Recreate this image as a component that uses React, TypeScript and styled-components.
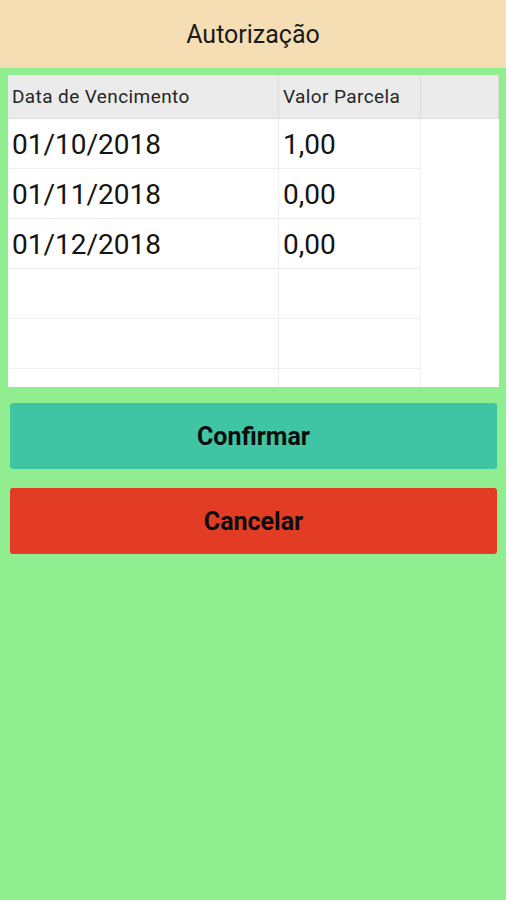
import { Fragment } from "react";
import styled, { createGlobalStyle } from "styled-components";

const GlobalStyle = createGlobalStyle`
  html, body {
    margin: 0;
    padding: 0;
    background: #90ee90;
    font-family: Roboto, "Noto Sans", Arial, sans-serif;
  }
`;

const Page = styled.div`
  width: 506px;
  min-height: 900px;
  background: #90ee90;
`;

const TopBar = styled.div`
  height: 68px;
  background: #f5deb3;
  display: flex;
  align-items: center;
  justify-content: center;
  font-size: 25px;
  color: #1a1a1a;
`;

const Content = styled.div`
  padding: 7px 7px 0 8px;
  display: flex;
  flex-direction: column;
`;

const TablePanel = styled.div`
  height: 312px;
  background: #ffffff;
  overflow: hidden;
`;

const Grid = styled.div`
  display: grid;
  grid-template-columns: 271px 142px 1fr;
`;

const HeadCell = styled.div`
  height: 43px;
  background: #ebebeb;
  border-right: 1px solid #dcdcdc;
  border-bottom: 1px solid #dcdcdc;
  display: flex;
  align-items: center;
  padding-left: 4px;
  font-size: 19px;
  letter-spacing: 0.4px;
  color: #262626;
  &:last-child {
    border-right: none;
  }
`;

const Cell = styled.div<{ col: number }>`
  grid-column: ${(p) => p.col};
  height: 49px;
  border-right: 1px solid #efefef;
  border-bottom: 1px solid #efefef;
  display: flex;
  align-items: center;
  padding-left: 4px;
  padding-top: 2px;
  box-sizing: border-box;
  height: 50px;
  font-size: 28px;
  color: #141414;
`;

const Actions = styled.div`
  display: flex;
  flex-direction: column;
  gap: 19px;
  padding: 16px 2px 0 2px;
`;

const ActionButton = styled.button<{ tone: string }>`
  height: 66px;
  border: none;
  border-radius: 3px;
  background: ${(p) => p.tone};
  font-family: Roboto, "Noto Sans", Arial, sans-serif;
  font-weight: 700;
  font-size: 25px;
  color: #0d0d0d;
  cursor: pointer;
`;

const rows = [
  ["01/10/2018", "1,00"],
  ["01/11/2018", "0,00"],
  ["01/12/2018", "0,00"],
  ["", ""],
  ["", ""],
  ["", ""],
];

export default function App() {
  return (
    <Page>
      <GlobalStyle />
      <TopBar>Autorização</TopBar>
      <Content>
        <TablePanel>
          <Grid>
            <HeadCell>Data de Vencimento</HeadCell>
            <HeadCell>Valor Parcela</HeadCell>
            <HeadCell />
            {rows.map((r, i) => (
              <Fragment key={i}>
                <Cell col={1}>{r[0]}</Cell>
                <Cell col={2}>{r[1]}</Cell>
              </Fragment>
            ))}
          </Grid>
        </TablePanel>
        <Actions>
          <ActionButton tone="#3fc4a4">Confirmar</ActionButton>
          <ActionButton tone="#e23c24">Cancelar</ActionButton>
        </Actions>
      </Content>
    </Page>
  );
}
